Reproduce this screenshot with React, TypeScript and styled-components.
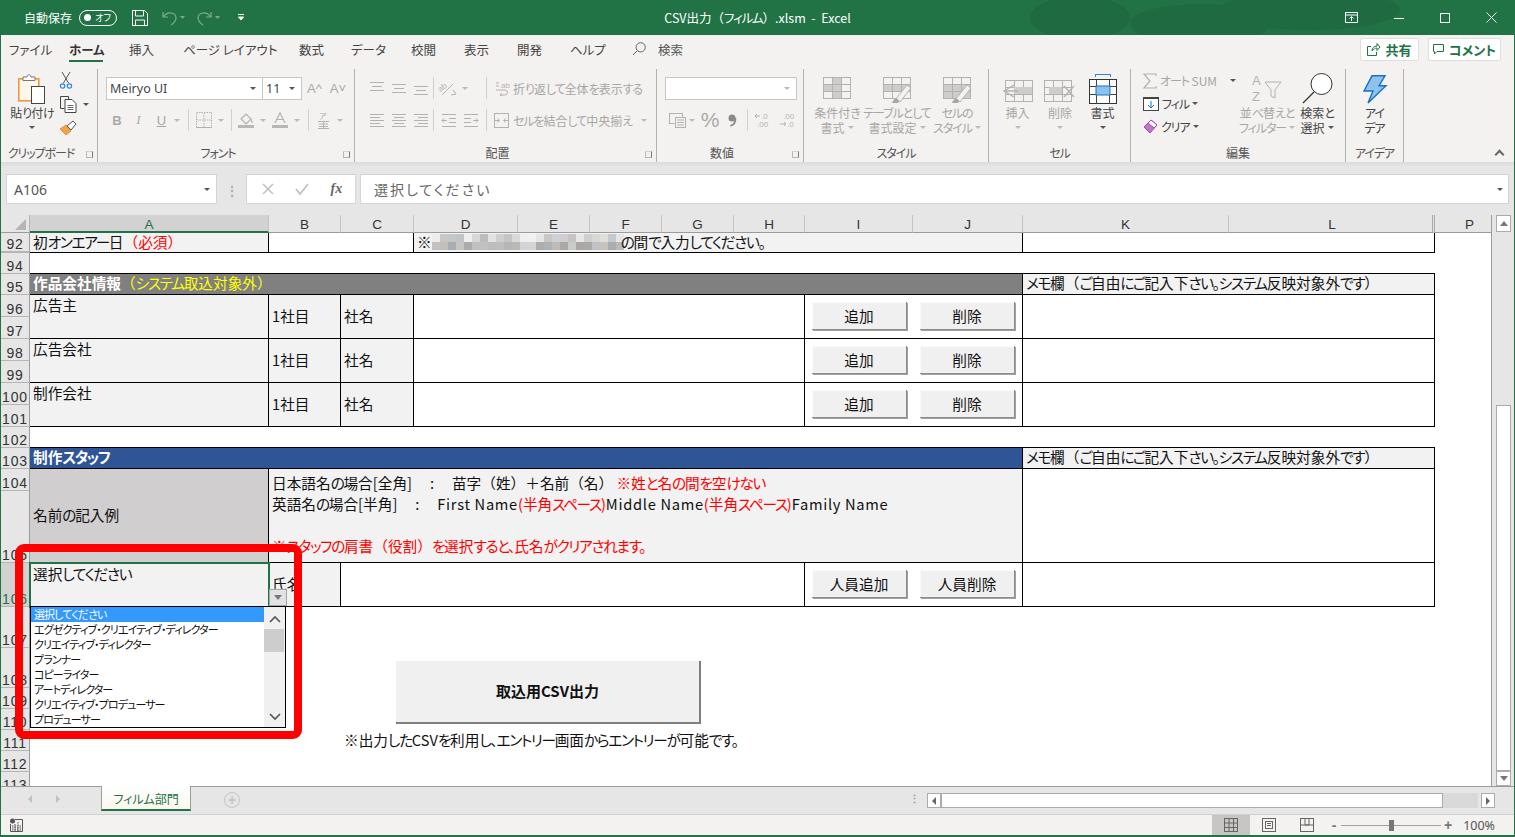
import React from 'react'
import styled, { createGlobalStyle } from 'styled-components'

const UI_FONT = '"Noto Sans CJK JP", "Noto Sans", sans-serif'
const GREEN = '#217346'
const DIS = '#b4b2b0'

const GlobalStyle = createGlobalStyle`
  html, body {
    margin: 0;
    padding: 0;
    width: 1515px;
    height: 837px;
    overflow: hidden;
    background: #f3f2f1;
  }
  * { box-sizing: border-box; }
`

/* Meiryo UI has narrow kana and full width kanji, so kana runs get squeezed */
const Kana = styled.span`
  font-feature-settings: 'palt';
  letter-spacing: -0.09em;
`

const Kan = styled.span`
  font-feature-settings: normal;
`

const jp = (text: string) =>
  text
    .split(/([\u3040-\u30ff、。]+)/)
    .map((s, i) => (i % 2 ? <Kana key={i}>{s}</Kana> : <Kan key={i}>{s}</Kan>))

/* ---------- icons ---------- */

const Svg = styled.svg`
  display: block;
  flex: none;
  overflow: visible;
`

const Icon = ({ w, h, children }: { w: number; h: number; children: React.ReactNode }) => (
  <Svg width={w} height={h} viewBox={`0 0 ${w} ${h}`} fill="none">
    {children}
  </Svg>
)

const Lines = ({ rows }: { rows: [number, number, number][] }) => (
  <>
    {rows.map(([y, a, b]) => (
      <path key={y + '-' + a} d={`M${a} ${y + 0.5}H${b}`} stroke={DIS} />
    ))}
  </>
)

const PasteIcon = () => (
  <Icon w={28} h={30}>
    <rect x="0.8" y="4.8" width="20" height="22" fill="#fdf6ea" stroke="#ed9a3c" strokeWidth="1.6" />
    <path d="M5 5V3h4c0-3 4-3 4 0h4v3.5H5z" fill="#fff" stroke="#777" />
    <rect x="13.5" y="12.5" width="13" height="17" fill="#fff" stroke="#444" />
  </Icon>
)

const ScissorsIcon = () => (
  <Icon w={12} h={17}>
    <path d="M2 0l6.5 11M10 0L3.5 11" stroke="#555" />
    <circle cx="2.6" cy="14" r="2.2" stroke="#2b88d8" strokeWidth="1.2" />
    <circle cx="9.4" cy="14" r="2.2" stroke="#2b88d8" strokeWidth="1.2" />
  </Icon>
)

const CopyIcon = () => (
  <Icon w={17} h={17}>
    <path d="M4.5 12.5H.5V.5h8V3" stroke="#444" />
    <path d="M5 3.5h7l4 4v9H5z" fill="#fff" stroke="#444" />
    <path d="M7.5 9.5h6M7.5 11.5h6M7.5 13.5h6" stroke="#666" />
  </Icon>
)

const BrushIcon = () => (
  <Icon w={16} h={15}>
    <path d="M0 8l6-4 5 6-5 4z" fill="#f2a24a" stroke="#e8913a" />
    <path d="M7 5l6-5 3 3-5 6z" fill="#fff" stroke="#555" />
  </Icon>
)

const FillIcon = () => (
  <Icon w={16} h={16}>
    <path d="M3 7l5-5 5 5-5 5z" stroke={DIS} strokeWidth="1.2" />
    <path d="M13 7c2 2 2 4 1 4s-1-2-1-4z" fill={DIS} />
    <rect y="13" width="16" height="3" fill="#b9b7b5" />
  </Icon>
)

const FontColorIcon = () => (
  <Icon w={16} h={16}>
    <path d="M3 11L8 .8 13 11M5 7.500h6" stroke={DIS} strokeWidth="1.2" />
    <rect y="13" width="16" height="3" fill="#b9b7b5" />
  </Icon>
)

const PhoneticIcon = () => (
  <Icon w={13} h={17}>
    <text x="2" y="7" fontFamily="Noto Sans CJK JP, sans-serif" fontSize="8" fill={DIS}>ア</text>
    <path d="M1 9.500h11M2 12h9M2 14.500h9M1 16.500h11M6.500 9v7" stroke={DIS} />
  </Icon>
)

const BorderIcon = () => (
  <Icon w={16} h={16}>
    <rect x="0.5" y="0.5" width="15" height="15" stroke={DIS} strokeDasharray="1.5 1" />
    <path d="M8 1v14M1 8h14" stroke={DIS} strokeDasharray="1.5 1" />
    <path d="M0 15.5h16" stroke={DIS} />
  </Icon>
)

const OrientIcon = () => (
  <Icon w={18} h={15}>
    <text x="0" y="9" fontFamily="Liberation Sans, sans-serif" fontSize="8" fill={DIS} transform="rotate(-40 4 8)">ab</text>
    <path d="M3 14L14 3" stroke={DIS} />
    <path d="M14 9l3 4-5 1" stroke={DIS} />
  </Icon>
)

const WrapIcon = () => (
  <Icon w={15} h={15}>
    <text x="6" y="7" fontFamily="Liberation Sans, sans-serif" fontSize="8" fill={DIS}>ab</text>
    <path d="M1 2h3M1 5h3M1 9h9a2.500 2.500 0 0 1 0 5H5M7 12l-2 2 2 1" stroke={DIS} />
  </Icon>
)

const CommaIcon = () => (
  <Icon w={8} h={13}>
    <circle cx="4" cy="4" r="3.500" fill="#8c8a88" />
    <path d="M7.400 4c.3 4-2 7-5 8" stroke="#8c8a88" strokeWidth="1.800" />
  </Icon>
)

const TableGrid = ({ shade, brush }: { shade: string; brush?: boolean }) => (
  <Icon w={32} h={28}>
    <rect x="2.5" y="1.5" width="27" height="21" fill="#f3f2f1" stroke={DIS} />
    <path d={shade} fill="#cfcdcb" />
    <path d="M2 8.5h28M2 15.5h28M11.5 2v21M20.5 2v21" stroke={DIS} />
    {brush && (
      <>
        <path d="M14 24l12-15 4 3-11 14z" fill="#f3f2f1" stroke={DIS} />
        <path d="M11 27c2-5 4-5 7-3l-1 3z" fill="#a9a7a5" />
      </>
    )}
  </Icon>
)

const InsertIcon = () => (
  <Icon w={32} h={24}>
    <rect x="3.5" y="0.5" width="27" height="21" stroke={DIS} />
    <path d="M3 7.5h28M3 14.5h28M12.5 1v21M21.5 1v21" stroke={DIS} />
    <rect x="12" y="7" width="18" height="7" fill="#cfcdcb" />
    <path d="M12 5L2 11l10 6M2 11h14" stroke={DIS} strokeWidth="1.4" />
  </Icon>
)

const DeleteIcon = () => (
  <Icon w={32} h={24}>
    <rect x="0.5" y="0.5" width="27" height="21" stroke={DIS} />
    <path d="M0 7.5h28M0 14.5h28M9.5 1v21M18.5 1v21" stroke={DIS} />
    <rect x="5" y="7" width="13" height="7" fill="#cfcdcb" />
    <path d="M20 6l10 11M30 6L20 17" stroke={DIS} strokeWidth="1.4" />
  </Icon>
)

const FormatIcon = () => (
  <Icon w={28} h={30}>
    <path d="M6 .5h16M6.5 0v3M21.5 0v3" stroke="#2b88d8" />
    <rect x="0.5" y="5.5" width="27" height="24" fill="#fff" stroke="#333" strokeWidth="1" />
    <path d="M0 12.5h28M0 20.5h28M7.5 6v24M20.5 6v24" stroke="#444" />
    <rect x="7" y="12" width="14" height="9" fill="#8fc1ee" stroke="#1672c4" />
  </Icon>
)

const SortIcon = () => (
  <Icon w={30} h={30}>
    <text x="0" y="11" fontFamily="Liberation Sans, sans-serif" fontSize="13" fill={DIS}>A</text>
    <text x="0" y="27" fontFamily="Liberation Sans, sans-serif" fontSize="13" fill={DIS}>Z</text>
    <path d="M13 8h16l-6 8v8l-4-2v-6z" stroke={DIS} />
  </Icon>
)

const FindIcon = () => (
  <Icon w={31} h={31}>
    <circle cx="19.5" cy="11" r="10.5" fill="#fff" stroke="#333" />
    <path d="M12 19L1 30" stroke="#333" strokeWidth="1.3" />
  </Icon>
)

const BoltIcon = () => (
  <Icon w={24} h={29}>
    <path d="M9 .8h13l-6 10h7L5 28l5-12H1z" fill="#8fc1ee" stroke="#1672c4" strokeWidth="1.4" />
  </Icon>
)

const SearchGlyph = ({ size, color }: { size: number; color: string }) => (
  <Icon w={size} h={size}>
    <circle cx={size * 0.62} cy={size * 0.38} r={size * 0.33} stroke={color} />
    <path d={`M${size * 0.38} ${size * 0.62}L1 ${size - 1}`} stroke={color} />
  </Icon>
)

/* ---------- shared small bits ---------- */

const Caret = styled.span<{ $dim?: boolean }>`
  display: inline-block;
  flex: none;
  width: 0;
  height: 0;
  border-left: 3px solid transparent;
  border-right: 3px solid transparent;
  border-top: 3px solid ${p => (p.$dim ? '#bcbab8' : '#555')};
`

/* ---------- title bar ---------- */

const Frame = styled.div`
  width: 1515px;
  height: 837px;
  display: flex;
  flex-direction: column;
  border-left: 1px solid ${GREEN};
  border-right: 1px solid ${GREEN};
  border-bottom: 2px solid ${GREEN};
  font-family: ${UI_FONT};
  font-feature-settings: 'palt';
  overflow: hidden;
`

const TitleBar = styled.div`
  position: relative;
  flex: none;
  height: 35px;
  margin: 0 -1px;
  background: ${GREEN};
  color: #fff;
  display: grid;
  grid-template-columns: 1fr auto 1fr;
  align-items: center;
`

const TitleArt = styled.svg`
  position: absolute;
  top: 0;
  left: 1010px;
  width: 400px;
  height: 35px;
`

const QuickBar = styled.div`
  display: flex;
  align-items: center;
  padding-left: 24px;
  font-size: 12px;
`

const Toggle = styled.span`
  display: flex;
  align-items: center;
  justify-content: space-between;
  width: 38px;
  height: 16px;
  margin: 0 15px 0 7px;
  padding: 0 5px 0 4px;
  border: 1px solid #fff;
  border-radius: 8px;
  font-size: 9px;
  &::before {
    content: '';
    width: 7px;
    height: 7px;
    border-radius: 50%;
    background: #fff;
  }
`

const QuickSlot = styled.span<{ $w: number; $dim?: boolean }>`
  display: flex;
  align-items: center;
  width: ${p => p.$w}px;
  opacity: ${p => (p.$dim ? 0.4 : 1)};
`

const TitleText = styled.div`
  font-size: 12.5px;
  position: relative;
  white-space: pre;
`

const WindowButtons = styled.div`
  position: relative;
  display: flex;
  justify-content: flex-end;
  align-items: center;
  padding-right: 18px;
  gap: 36px;
`

/* ---------- tabs ---------- */

const TabRow = styled.div`
  flex: none;
  height: 30px;
  background: #f3f2f1;
  display: flex;
  align-items: center;
  padding: 0 13px 2px 8px;
`

const Tab = styled.div<{ $w: number; $on?: boolean }>`
  position: relative;
  width: ${p => p.$w}px;
  font-size: 12.5px;
  color: ${p => (p.$on ? '#333' : '#444')};
  font-weight: ${p => (p.$on ? 700 : 400)};
  white-space: pre;
  ${p =>
    p.$on &&
    `&::after {
      content: '';
      position: absolute;
      left: 0;
      top: 20px;
      width: 34px;
      height: 2px;
      background: ${GREEN};
    }`}
`

const SearchTab = styled.div`
  display: flex;
  align-items: center;
  gap: 12px;
  font-size: 12.5px;
  color: #555;
`

const TabRight = styled.div`
  margin-left: auto;
  display: flex;
  gap: 9px;
`

const ShareButton = styled.div<{ $w: number }>`
  width: ${p => p.$w}px;
  height: 23px;
  display: flex;
  align-items: center;
  justify-content: center;
  gap: 5px;
  background: #fff;
  border: 1px solid #e1dfdd;
  border-radius: 2px;
  color: ${GREEN};
  font-size: 13px;
  font-weight: 700;
`

/* ---------- ribbon ---------- */

const Ribbon = styled.div`
  flex: none;
  height: 97px;
  background: #f3f2f1;
  display: flex;
  position: relative;
`

const Group = styled.div<{ $w: number }>`
  position: relative;
  width: ${p => p.$w}px;
  flex: none;
  height: 93px;
  margin-top: 4px;
  display: flex;
  flex-direction: column;
  border-right: 1px solid #b3b0ad;
`

const GroupBody = styled.div<{ $pad?: number; $col?: boolean }>`
  flex: 1;
  display: flex;
  flex-direction: ${p => (p.$col ? 'column' : 'row')};
  padding-left: ${p => p.$pad ?? 0}px;
`

const GroupLabel = styled.div<{ $launch?: boolean }>`
  height: 20px;
  padding-top: 2px;
  padding-right: ${p => (p.$launch ? 16 : 0)}px;
  font-size: 12px;
  line-height: 17px;
  text-align: center;
  color: #555;
  white-space: nowrap;
`

const Launcher = styled.span`
  position: absolute;
  right: 4px;
  bottom: 4px;
  width: 7px;
  height: 7px;
  border-left: 1px solid #b9b7b5;
  border-bottom: 1px solid #b9b7b5;
  border-top: 1px solid #d6d4d2;
  border-right: 1px solid #777;
`

const BigTool = styled.div<{ $w: number; $dim?: boolean }>`
  width: ${p => p.$w}px;
  flex: none;
  display: flex;
  flex-direction: column;
  align-items: center;
  color: ${p => (p.$dim ? '#a8a6a4' : '#444')};
  font-size: 12px;
  line-height: 15px;
  white-space: nowrap;
`

const BigIconBox = styled.div`
  height: 36px;
  display: flex;
  align-items: flex-end;
  justify-content: center;
  padding-bottom: 1px;
`

const CaretLine = styled.div`
  height: 15px;
  display: flex;
  align-items: center;
  justify-content: center;
  gap: 3px;
`

const ToolRow = styled.div<{ $h: number; $pad?: number }>`
  height: ${p => p.$h}px;
  flex: none;
  display: flex;
  align-items: center;
  padding-left: ${p => p.$pad ?? 0}px;
`

const Slot = styled.span<{ $w: number; $bold?: boolean; $serif?: boolean; $italic?: boolean; $under?: boolean; $size?: number }>`
  width: ${p => p.$w}px;
  flex: none;
  display: flex;
  align-items: center;
  justify-content: center;
  color: #aaa8a6;
  font-family: ${p => (p.$serif ? '"Liberation Serif", serif' : '"Liberation Sans", sans-serif')};
  font-size: ${p => p.$size ?? 13}px;
  font-weight: ${p => (p.$bold ? 700 : 400)};
  font-style: ${p => (p.$italic ? 'italic' : 'normal')};
  text-decoration: ${p => (p.$under ? 'underline' : 'none')};
`

const VSep = styled.span`
  width: 1px;
  height: 22px;
  flex: none;
  background: #d2d0ce;
`

const DimText = styled.span<{ $dark?: boolean }>`
  font-size: 12px;
  color: ${p => (p.$dark ? '#444' : '#a8a6a4')};
  white-space: nowrap;
`

const ComboBox = styled.div<{ $w: number; $dim?: boolean }>`
  width: ${p => p.$w}px;
  height: 23px;
  flex: none;
  display: flex;
  align-items: center;
  justify-content: space-between;
  padding: 0 6px 0 3px;
  background: #fff;
  border: 1px solid #c8c6c4;
  margin-right: -1px;
  font-family: 'Noto Sans', sans-serif;
  font-size: 12.5px;
  color: #444;
`

const SmallTool = styled.div`
  height: 23px;
  display: flex;
  align-items: center;
  gap: 3px;
`

const SmallStack = styled.div`
  width: 108px;
  flex: none;
  padding-left: 12px;
`

const ClipColumn = styled.div`
  display: flex;
  flex-direction: column;
  padding: 3px 0 0 7px;
  gap: 7px;
`

const ClipItem = styled.div`
  height: 17px;
  display: flex;
  align-items: center;
  gap: 6px;
`

const Collapse = styled.div`
  position: absolute;
  right: 11px;
  bottom: 4px;
  width: 7px;
  height: 7px;
  border-left: 2px solid #666;
  border-top: 2px solid #666;
  transform: rotate(45deg);
`

/* ---------- formula bar ---------- */

const FormulaBar = styled.div`
  flex: none;
  height: 53px;
  background: linear-gradient(#dcdbda 0, #e6e6e6 5px);
  display: flex;
  align-items: flex-start;
  padding: 12px 5px 0 5px;
`

const NameBox = styled.div`
  width: 211px;
  height: 30px;
  flex: none;
  background: #fff;
  border: 1px solid #d4d4d4;
  display: flex;
  align-items: center;
  justify-content: space-between;
  padding: 0 6px 0 7px;
  font-family: 'Noto Sans', sans-serif;
  font-size: 14px;
  color: #555;
`

const BarDots = styled.div`
  width: 29px;
  height: 30px;
  flex: none;
  display: flex;
  justify-content: center;
  align-items: center;
  color: #aaa;
  font-size: 12px;
  font-weight: 700;
`

const BarButtons = styled.div`
  width: 110px;
  height: 30px;
  flex: none;
  background: #fff;
  border: 1px solid #d4d4d4;
  display: flex;
  align-items: center;
  justify-content: space-around;
  padding: 0 2px 0 4px;
`

const FxMark = styled.span`
  font-family: 'Liberation Serif', serif;
  font-style: italic;
  font-weight: 700;
  font-size: 14px;
  color: #666;
`

const FormulaInput = styled.div`
  margin-left: 4px;
  flex: 1;
  height: 30px;
  background: #fff;
  border: 1px solid #d4d4d4;
  display: flex;
  align-items: center;
  justify-content: space-between;
  padding: 0 5px 0 13px;
  font-size: 14px;
  letter-spacing: 2px;
  color: #666;
`

/* ---------- sheet ---------- */

const SheetRow = styled.div`
  flex: none;
  height: 571px;
  display: flex;
  background: #e6e6e6;
`

const Sheet = styled.div`
  position: relative;
  width: 1491px;
  flex: none;
  height: 571px;
  overflow: hidden;
  background: #fff;
  display: grid;
  grid-template-columns: 29px 239px 72px 73px 104px 72px 72px 72px 71px 108px 110px 206px 206px 70px;
  grid-template-rows: 18px 20px 21px 21px 22px 22px 22px 22px 22px 22px 21px 21px 22px 72px 44px 41px 40px 21px 21px 21px 21px 21px;
  border-right: 1px solid #9b9b9b;
  font-family: ${UI_FONT};
`

const Corner = styled.div`
  grid-column: 1;
  grid-row: 1;
  background: #e6e6e6;
  border-right: 1px solid #b5b5b5;
  border-bottom: 1px solid #9b9b9b;
  position: relative;
  &::after {
    content: '';
    position: absolute;
    right: 3px;
    bottom: 2px;
    border-left: 11px solid transparent;
    border-bottom: 11px solid #b5b5b5;
  }
`

const ColHead = styled.div<{ $c: number; $on?: boolean; $double?: boolean }>`
  grid-column: ${p => p.$c};
  grid-row: 1;
  background: ${p => (p.$on ? '#d2d2d2' : '#e6e6e6')};
  border-right: ${p => (p.$double ? '3px double #a8a8a8' : '1px solid #c4c4c4')};
  border-bottom: ${p => (p.$on ? `2px solid ${GREEN}` : '1px solid #9b9b9b')};
  padding-left: ${p => (p.$double ? 3 : 0)}px;
  color: ${p => (p.$on ? GREEN : '#333')};
  font-family: 'Liberation Sans', sans-serif;
  font-size: 13.5px;
  line-height: 19px;
  text-align: center;
`

const RowHead = styled.div<{ $r: number; $on?: boolean; $thick?: boolean }>`
  grid-column: 1;
  grid-row: ${p => p.$r};
  background: ${p => (p.$on ? '#d2d2d2' : '#e6e6e6')};
  border-right: 1px solid ${p => (p.$on ? GREEN : '#9b9b9b')};
  border-bottom: ${p => (p.$thick ? 2 : 1)}px solid #b5b5b5;
  color: ${p => (p.$on ? GREEN : '#333')};
  font-family: 'Liberation Sans', sans-serif;
  font-size: 14px;
  letter-spacing: 0.8px;
  display: flex;
  align-items: flex-end;
  justify-content: center;
  line-height: 14px;
  overflow: hidden;
  white-space: nowrap;
`

const Cell = styled.div<{
  $c: string
  $r: string
  $bg?: string
  $color?: string
  $bold?: boolean
  $align?: 'start' | 'center' | 'end'
  $top?: boolean
  $bare?: boolean
}>`
  grid-column: ${p => p.$c};
  grid-row: ${p => p.$r};
  background: ${p => p.$bg ?? 'transparent'};
  color: ${p => p.$color ?? '#111'};
  font-size: 14.67px;
  font-weight: ${p => (p.$bold ? 700 : 400)};
  line-height: 19px;
  display: flex;
  align-items: ${p => p.$align ?? 'center'};
  padding: 0 0 ${p => (p.$top ? 3 : 2)}px 3px;
  white-space: nowrap;
  border-right: ${p => (p.$bare ? 'none' : '1px solid #000')};
  border-bottom: ${p => (p.$bare ? 'none' : '1px solid #000')};
  border-top: ${p => (p.$top ? '1px solid #000' : 'none')};
  margin-top: ${p => (p.$top ? -1 : 0)}px;
`

const ActiveCell = styled(Cell)`
  position: relative;
  z-index: 2;
  outline: 2px solid ${GREEN};
  outline-offset: -1px;
  padding-top: 1px;
`

const NoteCell = styled(Cell)`
  display: block;
  padding-top: 3px;
  line-height: 21px;
  white-space: pre;
`

const Red = styled.span`
  color: #ff0000;
`

const Yellow = styled.span`
  color: #ffff00;
  font-weight: 400;
`

const Latin = styled.span`
  letter-spacing: 0.7px;
`

const Mosaic = styled.span`
  display: inline-grid;
  grid-template-columns: repeat(24, 8px);
  grid-auto-rows: 8px;
  margin-right: -3px;
`

const Tile = styled.i<{ $bg: string }>`
  background: ${p => p.$bg};
`

const ButtonCell = styled(Cell)`
  gap: 13px;
  padding-left: 7px;
  padding-bottom: 1px;
`

const SheetButton = styled.div`
  width: 95px;
  height: 28px;
  display: flex;
  align-items: center;
  justify-content: center;
  background: #f0f0f0;
  border-right: 1px solid #8c8c8c;
  border-bottom: 1px solid #8c8c8c;
  box-shadow: 1px 1px 0 #a0a0a0, inset 1px 1px 0 #fafafa;
  font-size: 14.67px;
  color: #111;
`

const CsvButton = styled.div`
  position: absolute;
  left: 395px;
  top: 446px;
  width: 305px;
  height: 63px;
  padding-bottom: 2px;
  display: flex;
  align-items: center;
  justify-content: center;
  background: #f0f0f0;
  border-right: 2px solid #7f7f7f;
  border-bottom: 2px solid #7f7f7f;
  font-size: 15px;
  font-weight: 700;
  color: #111;
`

const DropButton = styled.div`
  position: absolute;
  left: 268px;
  top: 374px;
  z-index: 3;
  width: 18px;
  height: 17px;
  background: #e2e2e6;
  border: 1px solid #a6a6a6;
  display: flex;
  align-items: center;
  justify-content: center;
`

const DropList = styled.div`
  position: absolute;
  left: 29px;
  top: 391px;
  z-index: 3;
  width: 256px;
  height: 122px;
  background: #fff;
  border: 1px solid #000;
  display: flex;
`

const DropItems = styled.div`
  flex: 1;
`

const DropItem = styled.div<{ $on?: boolean }>`
  height: 15px;
  line-height: 15px;
  padding-left: 3px;
  font-size: 11px;
  font-feature-settings: 'palt';
  letter-spacing: -0.9px;
  white-space: nowrap;
  color: ${p => (p.$on ? '#fff' : '#111')};
  background: ${p => (p.$on ? '#3399ff' : 'transparent')};
`

const DropScroll = styled.div`
  position: relative;
  width: 21px;
  flex: none;
  background: #f0f0f0;
  display: flex;
  flex-direction: column;
  justify-content: space-between;
  align-items: center;
  padding: 9px 0 7px;
  &::before {
    content: '';
    position: absolute;
    left: 0;
    top: 22px;
    width: 20px;
    height: 23px;
    background: #cdcdcd;
  }
`

const RedFrame = styled.div`
  position: absolute;
  left: 14px;
  top: 329px;
  z-index: 4;
  width: 287px;
  height: 195px;
  border: 8px solid #ff0000;
  border-radius: 9px;
  pointer-events: none;
`

const VScroll = styled.div`
  flex: 1;
  display: flex;
  flex-direction: column;
  padding: 0 3px 0 4px;
`

const ScrollButton = styled.div<{ $h: number }>`
  height: ${p => p.$h}px;
  flex: none;
  display: flex;
  align-items: center;
  justify-content: center;
  background: #fff;
  border: 1px solid #ababab;
`

const ScrollTrack = styled.div`
  flex: 1;
  padding-top: 173px;
  background: #e6e6e6;
  display: flex;
`

const ScrollThumb = styled.div`
  flex: 1;
  background: #fff;
  border: 1px solid #ababab;
`

const UpArrow = styled.span`
  width: 0;
  height: 0;
  border-left: 4px solid transparent;
  border-right: 4px solid transparent;
  border-bottom: 5px solid #777;
`

const DownArrow = styled.span`
  width: 0;
  height: 0;
  border-left: 4px solid transparent;
  border-right: 4px solid transparent;
  border-top: 5px solid #777;
`

/* ---------- bottom ---------- */

const TabBar = styled.div`
  flex: none;
  height: 28px;
  background: #e6e6e6;
  border-top: 1px solid #9b9b9b;
  display: flex;
  align-items: flex-start;
`

const TabNav = styled.div`
  width: 100px;
  height: 24px;
  flex: none;
  display: flex;
  align-items: center;
  justify-content: flex-start;
  gap: 24px;
  padding-left: 27px;
`

const SideArrow = styled.span<{ $dir: 'l' | 'r'; $dark?: boolean }>`
  width: 0;
  height: 0;
  border-top: 4px solid transparent;
  border-bottom: 4px solid transparent;
  ${p => (p.$dir === 'l' ? 'border-right' : 'border-left')}: 4px solid ${p => (p.$dark ? '#666' : '#c0c0c0')};
`

const SheetTab = styled.div`
  width: 90px;
  height: 25px;
  flex: none;
  margin-top: -1px;
  background: linear-gradient(#fff, #fbf7ee);
  border-left: 1px solid #9b9b9b;
  border-right: 1px solid #9b9b9b;
  border-bottom: 2px solid ${GREEN};
  color: ${GREEN};
  font-size: 12px;
  line-height: 25px;
  text-align: center;
`

const AddSheet = styled.div`
  margin: 5px 0 0 33px;
  width: 16px;
  height: 16px;
  flex: none;
  border: 1px solid #c4c4c4;
  border-radius: 50%;
  color: #c4c4c4;
  display: flex;
  align-items: center;
  justify-content: center;
  font-family: 'Liberation Sans', sans-serif;
  font-size: 14px;
  font-weight: 700;
  line-height: 1;
`

const TabDots = styled.div`
  margin: 3px 0 0 669px;
  width: 18px;
  flex: none;
  color: #a0a0a0;
  font-size: 11px;
  font-weight: 700;
`

const HScroll = styled.div`
  margin-top: 6px;
  width: 568px;
  height: 15px;
  flex: none;
  display: flex;
`

const HButton = styled.div`
  width: 14px;
  flex: none;
  background: #fff;
  border: 1px solid #ababab;
  display: flex;
  align-items: center;
  justify-content: center;
`

const HThumb = styled.div`
  width: 502px;
  flex: none;
  background: #fff;
  border: 1px solid #ababab;
`

const HRest = styled.div`
  flex: 1;
  margin-right: 3px;
  background: #d9d9d9;
`

const StatusBar = styled.div`
  flex: none;
  height: 21px;
  background: #f3f2f1;
  border-top: 1px solid #d0d0d0;
  display: flex;
  align-items: center;
  padding-left: 8px;
`

const StatusRight = styled.div`
  margin-left: auto;
  height: 100%;
  display: flex;
  align-items: center;
  padding-right: 19px;
`

const ViewButton = styled.div<{ $on?: boolean }>`
  width: 38px;
  height: 100%;
  display: flex;
  align-items: center;
  justify-content: center;
  background: ${p => (p.$on ? '#c8c6c4' : 'transparent')};
`

const ZoomTrack = styled.div`
  position: relative;
  width: 100px;
  height: 1px;
  margin: 0 2px;
  background: #a0a0a0;
  &::after {
    content: '';
    position: absolute;
    left: 48px;
    top: -5px;
    width: 5px;
    height: 11px;
    background: #777;
  }
`

const ZoomSign = styled.span`
  font-family: 'Liberation Sans', sans-serif;
  font-size: 14px;
  font-weight: 700;
  color: #777;
  width: 10px;
  text-align: center;
  line-height: 14px;
`

const ZoomValue = styled.span`
  margin-left: 10px;
  font-family: 'Noto Sans', sans-serif;
  font-size: 12.5px;
  color: #555;
`

/* ---------- data ---------- */

const tabs: [string, number, boolean?][] = [
  ['ファイル', 60],
  ['ホーム', 60, true],
  ['挿入', 54],
  ['ページ レイアウト', 116],
  ['数式', 52],
  ['データ', 60],
  ['校閲', 53],
  ['表示', 53],
  ['開発', 53],
  ['ヘルプ', 62],
]

const columns: [string, number, boolean?, boolean?][] = [
  ['A', 2, true],
  ['B', 3],
  ['C', 4],
  ['D', 5],
  ['E', 6],
  ['F', 7],
  ['G', 8],
  ['H', 9],
  ['I', 10],
  ['J', 11],
  ['K', 12],
  ['L', 13, false, true],
  ['P', 14],
]

const rowLabels = ['92', '94', '95', '96', '97', '98', '99', '100', '101', '102', '103', '104', '105', '106', '107', '108', '109', '110', '111', '112', '113']

const tiles = [
  '#ececec', '#c9c6c4', '#c5c6c8', '#c1c3c6', '#eeeeee', '#d7d7d5', '#bebdbc', '#e2e2e0', '#cfcfcd', '#c5c5c9', '#dadad8', '#efefef',
  '#f0f0f0', '#e6e6e6', '#c9c7c5', '#ced0d2', '#d0cecc', '#c6c3c2', '#e6e8e8', '#d0cfcd', '#d7d7d5', '#e0dedb', '#c7cacc', '#e6e6e6',
  '#c4c0bf', '#c4bebb', '#a9aeb5', '#c6c5c1', '#aeaaaa', '#bfc0bf', '#c2c1bf', '#bcbcbc', '#c0bfbd', '#b8b6b4', '#bbb9b6', '#d2d3d5',
  '#d4d4d4', '#b0acab', '#adb2b8', '#bfbbb9', '#aca8a6', '#c7cccb', '#aba6a5', '#aaaba6', '#c0c1c4', '#c9c1bb', '#a9adb2', '#bcbab8',
]

const staff = [
  '選択してください',
  'エグゼクティブ・クリエイティブ・ディレクター',
  'クリエイティブ・ディレクター',
  'プランナー',
  'コピーライター',
  'アートディレクター',
  'クリエイティブ・プロデューサー',
  'プロデューサー',
]

const companies: [string, string][] = [
  ['広告主', '5 / 7'],
  ['広告会社', '7 / 9'],
  ['制作会社', '9 / 11'],
]

const MEMO = 'メモ欄（ご自由にご記入下さい。システム反映対象外です）'

export default function App() {
  return (
    <>
      <GlobalStyle />
      <Frame>
        <TitleBar>
          <TitleArt viewBox="0 0 400 35" fill="#1f6a40">
            <ellipse cx="70" cy="18" rx="50" ry="22" />
            <ellipse cx="190" cy="24" rx="70" ry="20" />
            <ellipse cx="300" cy="10" rx="90" ry="20" />
          </TitleArt>
          <QuickBar>
            自動保存
            <Toggle>オフ</Toggle>
            <QuickSlot $w={30}>
              <Icon w={16} h={16}>
                <path d="M.5.5h12l3 3v12H.5zM3.5 1v5h8V1M3.5 15.5V10h9v5.5" stroke="#fff" />
              </Icon>
            </QuickSlot>
            <QuickSlot $w={35} $dim>
              <Icon w={22} h={16}>
                <path d="M1 2v5h5M1.5 7C5 1 14 2 14 8c0 3-2 5-5 7" stroke="#fff" strokeWidth="1.2" />
                <path d="M18 6h5l-2.500 3z" fill="#fff" />
              </Icon>
            </QuickSlot>
            <QuickSlot $w={41} $dim>
              <Icon w={22} h={16}>
                <path d="M14 2v5H9M13.500 7C10 1 1 2 1 8c0 3 2 5 5 7" stroke="#fff" strokeWidth="1.2" />
                <path d="M18 6h5l-2.500 3z" fill="#fff" />
              </Icon>
            </QuickSlot>
            <QuickSlot $w={10}>
              <Icon w={6} h={7}>
                <path d="M0 .5h6M.5 3h5L3 6z" stroke="#fff" fill="#fff" />
              </Icon>
            </QuickSlot>
          </QuickBar>
          <TitleText>{jp('CSV出力（フィルム）.xlsm  -  Excel')}</TitleText>
          <WindowButtons>
            <Icon w={13} h={11}>
              <path d="M.5.5h12v10H.5zM1 3h11M6.500 9V5M4.500 6.500l2-2 2 2" stroke="#fff" />
            </Icon>
            <Icon w={10} h={10}>
              <path d="M0 5.500h10" stroke="#fff" />
            </Icon>
            <Icon w={10} h={10}>
              <rect x=".5" y=".5" width="9" height="9" stroke="#fff" />
            </Icon>
            <Icon w={11} h={11}>
              <path d="M.5.5l10 10M10.500.5l-10 10" stroke="#fff" />
            </Icon>
          </WindowButtons>
        </TitleBar>

        <TabRow>
          {tabs.map(([label, w, on]) => (
            <Tab key={label} $w={w} $on={on}>
              {label}
            </Tab>
          ))}
          <SearchTab>
            <SearchGlyph size={14} color="#666" />
            検索
          </SearchTab>
          <TabRight>
            <ShareButton $w={59}>
              <Icon w={13} h={13}>
                <path d="M4 3.500H.5v9h9V9M5 8c0-3 2-5 5-5V.5l3 3.500-3 3.500V5c-2 0-3 1-5 3z" stroke={GREEN} />
              </Icon>
              共有
            </ShareButton>
            <ShareButton $w={73}>
              <Icon w={11} h={11}>
                <path d="M.5.5h10v7H4L1.500 10V7.500h-1z" stroke={GREEN} />
              </Icon>
              コメント
            </ShareButton>
          </TabRight>
        </TabRow>

        <Ribbon>
          <Group $w={97}>
            <GroupBody $pad={10}>
              <BigTool $w={42}>
                <BigIconBox>
                  <PasteIcon />
                </BigIconBox>
                <span>{jp('貼り付け')}</span>
                <CaretLine>
                  <Caret />
                </CaretLine>
              </BigTool>
              <ClipColumn>
                <ClipItem>
                  <ScissorsIcon />
                </ClipItem>
                <ClipItem>
                  <CopyIcon />
                  <Caret />
                </ClipItem>
                <ClipItem>
                  <BrushIcon />
                </ClipItem>
              </ClipColumn>
            </GroupBody>
            <GroupLabel $launch>{jp('クリップボード')}</GroupLabel>
            <Launcher />
          </Group>

          <Group $w={257}>
            <GroupBody $col>
              <ToolRow $h={38} $pad={8}>
                <ComboBox $w={157}>
                  Meiryo UI
                  <Caret />
                </ComboBox>
                <ComboBox $w={40}>
                  11
                  <Caret />
                </ComboBox>
                <Slot $w={27}>A^</Slot>
                <Slot $w={20}>A˅</Slot>
              </ToolRow>
              <ToolRow $h={26} $pad={8}>
                <Slot $w={22} $bold>B</Slot>
                <Slot $w={21} $serif $italic>I</Slot>
                <Slot $w={25} $under>U</Slot>
                <Caret $dim />
                <Slot $w={8} />
                <VSep />
                <Slot $w={29}>
                  <BorderIcon />
                </Slot>
                <Caret $dim />
                <Slot $w={7} />
                <VSep />
                <Slot $w={28}>
                  <FillIcon />
                </Slot>
                <Caret $dim />
                <Slot $w={28}>
                  <FontColorIcon />
                </Slot>
                <Caret $dim />
                <Slot $w={8} />
                <VSep />
                <Slot $w={28}>
                  <PhoneticIcon />
                </Slot>
                <Caret $dim />
              </ToolRow>
            </GroupBody>
            <GroupLabel $launch>{jp('フォント')}</GroupLabel>
            <Launcher />
          </Group>

          <Group $w={302}>
            <GroupBody $col>
              <ToolRow $h={38} $pad={11}>
                <Slot $w={22}>
                  <Icon w={14} h={14}>
                    <Lines rows={[[1, 0, 14], [5, 2, 12], [9, 0, 14]]} />
                  </Icon>
                </Slot>
                <Slot $w={22}>
                  <Icon w={14} h={14}>
                    <Lines rows={[[3, 0, 14], [7, 2, 12], [11, 0, 14]]} />
                  </Icon>
                </Slot>
                <Slot $w={22}>
                  <Icon w={14} h={14}>
                    <Lines rows={[[5, 0, 14], [9, 2, 12], [13, 0, 14]]} />
                  </Icon>
                </Slot>
                <Slot $w={1} />
                <VSep />
                <Slot $w={28}>
                  <OrientIcon />
                </Slot>
                <Caret $dim />
                <Slot $w={18} />
                <VSep />
                <Slot $w={8} />
                <WrapIcon />
                <Slot $w={3} />
                <DimText>{jp('折り返して全体を表示する')}</DimText>
              </ToolRow>
              <ToolRow $h={26} $pad={11}>
                <Slot $w={22}>
                  <Icon w={14} h={14}>
                    <Lines rows={[[1, 0, 14], [4, 0, 10], [7, 0, 14], [10, 0, 10], [13, 0, 14]]} />
                  </Icon>
                </Slot>
                <Slot $w={22}>
                  <Icon w={14} h={14}>
                    <Lines rows={[[1, 0, 14], [4, 2, 12], [7, 0, 14], [10, 2, 12], [13, 0, 14]]} />
                  </Icon>
                </Slot>
                <Slot $w={22}>
                  <Icon w={14} h={14}>
                    <Lines rows={[[1, 0, 14], [4, 4, 14], [7, 0, 14], [10, 4, 14], [13, 0, 14]]} />
                  </Icon>
                </Slot>
                <Slot $w={1} />
                <VSep />
                <Slot $w={8} />
                <Icon w={14} h={14}>
                  <path d="M0 1.500h14M7 5.500h7M7 9.500h7M0 13.500h14M5 7.500H0M2 5.500L0 7.500l2 2" stroke={DIS} />
                </Icon>
                <Slot $w={8} />
                <Icon w={14} h={14}>
                  <path d="M0 1.500h14M0 5.500h7M0 9.500h7M0 13.500h14M9 7.500h5M12 5.500l2 2-2 2" stroke={DIS} />
                </Icon>
                <Slot $w={8} />
                <VSep />
                <Slot $w={7} />
                <Icon w={15} h={15}>
                  <rect x=".5" y=".5" width="14" height="14" stroke={DIS} />
                  <path d="M1 7.500h4M14 7.500h-4M3.500 5.500l2 2-2 2M11.500 5.500l-2 2 2 2" stroke={DIS} />
                </Icon>
                <Slot $w={4} />
                <DimText>{jp('セルを結合して中央揃え')}</DimText>
                <Slot $w={9} />
                <Caret $dim />
              </ToolRow>
            </GroupBody>
            <GroupLabel $launch>{jp('配置')}</GroupLabel>
            <Launcher />
          </Group>

          <Group $w={147}>
            <GroupBody $col>
              <ToolRow $h={38} $pad={8}>
                <ComboBox $w={132}>
                  <span />
                  <Caret $dim />
                </ComboBox>
              </ToolRow>
              <ToolRow $h={26} $pad={8}>
                <Slot $w={24}>
                  <Icon w={17} h={15}>
                    <rect x=".5" y=".5" width="13" height="10" stroke={DIS} />
                    <rect x="6.500" y="4.500" width="10" height="10" fill="#f3f2f1" stroke={DIS} />
                    <path d="M8 7h7M8 9.500h7M8 12h7" stroke={DIS} />
                  </Icon>
                </Slot>
                <Caret $dim />
                <Slot $w={30} $size={21}>%</Slot>
                <Slot $w={14}>
                  <CommaIcon />
                </Slot>
                <Slot $w={8} />
                <VSep />
                <Slot $w={30}>
                  <Icon w={16} h={16}>
                    <text x="6" y="7" fontFamily="Liberation Sans, sans-serif" fontSize="8" fill={DIS}>.0</text>
                    <text x="2" y="15" fontFamily="Liberation Sans, sans-serif" fontSize="8" fill={DIS}>.00</text>
                    <path d="M5 4H0M2 2L0 4l2 2" stroke={DIS} />
                  </Icon>
                </Slot>
                <Slot $w={18}>
                  <Icon w={16} h={16}>
                    <text x="4" y="7" fontFamily="Liberation Sans, sans-serif" fontSize="8" fill={DIS}>.00</text>
                    <text x="8" y="15" fontFamily="Liberation Sans, sans-serif" fontSize="8" fill={DIS}>.0</text>
                    <path d="M1 12h6M5 10l2 2-2 2" stroke={DIS} />
                  </Icon>
                </Slot>
              </ToolRow>
            </GroupBody>
            <GroupLabel $launch>{jp('数値')}</GroupLabel>
            <Launcher />
          </Group>

          <Group $w={185}>
            <GroupBody $pad={3}>
              <BigTool $w={60} $dim>
                <BigIconBox>
                  <TableGrid shade="M3 9h17v6H3zM12 2h9v7h-9zM12 15h9v7h-9z" />
                </BigIconBox>
                <span>{jp('条件付き')}</span>
                <CaretLine>
                  <span>{jp('書式')}</span> <Caret $dim />
                </CaretLine>
              </BigTool>
              <BigTool $w={60} $dim>
                <BigIconBox>
                  <TableGrid shade="M3 9h26v6H3z" brush />
                </BigIconBox>
                <span>{jp('テーブルとして')}</span>
                <CaretLine>
                  <span>{jp('書式設定')}</span> <Caret $dim />
                </CaretLine>
              </BigTool>
              <BigTool $w={60} $dim>
                <BigIconBox>
                  <TableGrid shade="M3 9h26v13H3z" brush />
                </BigIconBox>
                <span>{jp('セルの')}</span>
                <CaretLine>
                  <span>{jp('スタイル')}</span> <Caret $dim />
                </CaretLine>
              </BigTool>
            </GroupBody>
            <GroupLabel>{jp('スタイル')}</GroupLabel>
          </Group>

          <Group $w={142}>
            <GroupBody $pad={7}>
              <BigTool $w={43} $dim>
                <BigIconBox>
                  <InsertIcon />
                </BigIconBox>
                挿入
                <CaretLine>
                  <Caret $dim />
                </CaretLine>
              </BigTool>
              <BigTool $w={42} $dim>
                <BigIconBox>
                  <DeleteIcon />
                </BigIconBox>
                削除
                <CaretLine>
                  <Caret $dim />
                </CaretLine>
              </BigTool>
              <BigTool $w={43}>
                <BigIconBox>
                  <FormatIcon />
                </BigIconBox>
                書式
                <CaretLine>
                  <Caret />
                </CaretLine>
              </BigTool>
            </GroupBody>
            <GroupLabel>{jp('セル')}</GroupLabel>
          </Group>

          <Group $w={215}>
            <GroupBody>
              <SmallStack>
                <SmallTool>
                  <Icon w={14} h={16}>
                    <path d="M13 3V1H1l6 7-6 7h12v-2" stroke={DIS} strokeWidth="1.2" />
                  </Icon>
                  <DimText>{jp('オート SUM')}</DimText>
                  <Slot $w={7} />
                  <Caret />
                </SmallTool>
                <SmallTool>
                  <Icon w={16} h={14}>
                    <rect x=".5" y="1.500" width="15" height="12" fill="#fff" stroke="#444" />
                    <path d="M0 .5h16" stroke="#444" />
                    <path d="M8 4v7M5 8l3 3 3-3" stroke="#1672c4" />
                  </Icon>
                  <DimText $dark>{jp('フィル')}</DimText>
                  <Caret />
                </SmallTool>
                <SmallTool>
                  <Icon w={15} h={15}>
                    <path d="M1 8l7-7 6 5-7 8z" fill="#c177c9" stroke="#a24bab" />
                    <path d="M5 4l6 5 3-3-6-5z" fill="#fff" stroke="#a24bab" />
                  </Icon>
                  <DimText $dark>{jp('クリア')}</DimText>
                  <Caret />
                </SmallTool>
              </SmallStack>
              <BigTool $w={56} $dim>
                <BigIconBox>
                  <SortIcon />
                </BigIconBox>
                <span>{jp('並べ替えと')}</span>
                <CaretLine>
                  <span>{jp('フィルター')}</span> <Caret $dim />
                </CaretLine>
              </BigTool>
              <BigTool $w={44}>
                <BigIconBox>
                  <FindIcon />
                </BigIconBox>
                <span>{jp('検索と')}</span>
                <CaretLine>
                  選択 <Caret />
                </CaretLine>
              </BigTool>
            </GroupBody>
            <GroupLabel>{jp('編集')}</GroupLabel>
          </Group>

          <Group $w={58}>
            <GroupBody>
              <BigTool $w={57}>
                <BigIconBox>
                  <BoltIcon />
                </BigIconBox>
                <span>{jp('アイ')}</span>
                <CaretLine>{jp('デア')}</CaretLine>
              </BigTool>
            </GroupBody>
            <GroupLabel>{jp('アイデア')}</GroupLabel>
          </Group>
          <Collapse />
        </Ribbon>

        <FormulaBar>
          <NameBox>
            A106
            <Caret />
          </NameBox>
          <BarDots>⋮</BarDots>
          <BarButtons>
            <Icon w={12} h={12}>
              <path d="M1 1l10 10M11 1L1 11" stroke="#c2c2c2" strokeWidth="1.6" />
            </Icon>
            <Icon w={14} h={12}>
              <path d="M1 6l4 5 8-10" stroke="#c2c2c2" strokeWidth="1.8" />
            </Icon>
            <FxMark>fx</FxMark>
          </BarButtons>
          <FormulaInput>
            選択してください
            <Caret />
          </FormulaInput>
        </FormulaBar>

        <SheetRow>
          <Sheet>
            <Corner />
            {columns.map(([label, c, on, dbl]) => (
              <ColHead key={label} $c={c} $on={on} $double={dbl}>
                {label}
              </ColHead>
            ))}
            {rowLabels.map((label, i) => (
              <RowHead key={label} $r={i + 2} $on={label === '106'} $thick={label === '92'}>
                {label}
              </RowHead>
            ))}

            <Cell $c="2" $r="2" $bg="#f2f2f2">
              {jp('初オンエアー日')}
              <Red>{jp('（必須）')}</Red>
            </Cell>
            <Cell $c="3 / 5" $r="2" />
            <Cell $c="5 / 12" $r="2" $bg="#f2f2f2">
              {jp('※')}
              <Mosaic>
                {tiles.map((t, i) => (
                  <Tile key={i} $bg={t} />
                ))}
              </Mosaic>
              {jp('の間で入力してください。')}
            </Cell>
            <Cell $c="12 / 14" $r="2" />

            <Cell $c="2 / 12" $r="4" $bg="#808080" $color="#fff" $bold $top>
              {jp('作品会社情報')}
              <Yellow>{jp('（システム取込対象外）')}</Yellow>
            </Cell>
            <Cell $c="12 / 14" $r="4" $bg="#f2f2f2" $top>
              {jp(MEMO)}
            </Cell>

            {companies.map(([name, span]) => (
              <React.Fragment key={name}>
                <Cell $c="2" $r={span} $bg="#f2f2f2" $align="start">
                  {jp(name)}
                </Cell>
                <Cell $c="3" $r={span} $bg="#f2f2f2">
                  1社目
                </Cell>
                <Cell $c="4" $r={span} $bg="#f2f2f2">
                  社名
                </Cell>
                <Cell $c="5 / 10" $r={span} />
                <ButtonCell $c="10 / 12" $r={span}>
                  <SheetButton>追加</SheetButton>
                  <SheetButton>削除</SheetButton>
                </ButtonCell>
                <Cell $c="12 / 14" $r={span} />
              </React.Fragment>
            ))}

            <Cell $c="2 / 12" $r="12" $bg="#2f5597" $color="#fff" $bold $top>
              {jp('制作スタッフ')}
            </Cell>
            <Cell $c="12 / 14" $r="12" $bg="#f2f2f2" $top>
              {jp(MEMO)}
            </Cell>

            <Cell $c="2" $r="13 / 15" $bg="#d0cece">
              {jp('名前の記入例')}
            </Cell>
            <NoteCell $c="3 / 12" $r="13 / 15" $bg="#f2f2f2">
              {jp('日本語名の場合[全角]　 : 　苗字（姓）＋名前（名）')}
              <Red> {jp('※姓と名の間を空けない')}</Red>
              {jp('\n英語名の場合[半角]　 : 　')}
              <Latin>First Name</Latin>
              <Red>{jp('(半角スペース)')}</Red>
              <Latin>Middle Name</Latin>
              <Red>{jp('(半角スペース)')}</Red>
              <Latin>Family Name</Latin>
              {'\n\n'}
              <Red>{jp('※スタッフの肩書（役割）を選択すると、氏名がクリアされます。')}</Red>
            </NoteCell>
            <Cell $c="12 / 14" $r="13 / 15" />

            <ActiveCell $c="2" $r="15" $bg="#f2f2f2" $align="start">
              {jp('選択してください')}
            </ActiveCell>
            <Cell $c="3" $r="15" $bg="#f2f2f2">
              氏名
            </Cell>
            <Cell $c="4 / 10" $r="15" />
            <ButtonCell $c="10 / 12" $r="15">
              <SheetButton>人員追加</SheetButton>
              <SheetButton>人員削除</SheetButton>
            </ButtonCell>
            <Cell $c="12 / 14" $r="15" />

            <Cell $c="4 / 12" $r="20" $bare>
              {jp('※出力したCSVを利用し、エントリー画面からエントリーが可能です。')}
            </Cell>

            <CsvButton>取込用CSV出力</CsvButton>

            <DropButton>
              <DownArrow />
            </DropButton>
            <DropList>
              <DropItems>
                {staff.map((s, i) => (
                  <DropItem key={s} $on={i === 0}>
                    {s}
                  </DropItem>
                ))}
              </DropItems>
              <DropScroll>
                <Icon w={12} h={7}>
                  <path d="M1 6l5-5 5 5" stroke="#555" strokeWidth="1.6" />
                </Icon>
                <Icon w={12} h={7}>
                  <path d="M1 1l5 5 5-5" stroke="#555" strokeWidth="1.6" />
                </Icon>
              </DropScroll>
            </DropList>
            <RedFrame />
          </Sheet>
          <VScroll>
            <ScrollButton $h={17}>
              <UpArrow />
            </ScrollButton>
            <ScrollTrack>
              <ScrollThumb />
            </ScrollTrack>
            <ScrollButton $h={15}>
              <DownArrow />
            </ScrollButton>
          </VScroll>
        </SheetRow>

        <TabBar>
          <TabNav>
            <SideArrow $dir="l" />
            <SideArrow $dir="r" />
          </TabNav>
          <SheetTab>フィルム部門</SheetTab>
          <AddSheet>+</AddSheet>
          <TabDots>⋮</TabDots>
          <HScroll>
            <HButton>
              <SideArrow $dir="l" $dark />
            </HButton>
            <HThumb />
            <HRest />
            <HButton>
              <SideArrow $dir="r" $dark />
            </HButton>
          </HScroll>
        </TabBar>

        <StatusBar>
          <Icon w={14} h={14}>
            <circle cx="3.500" cy="3" r="2.500" fill="#555" />
            <path d="M6 1.500h7.500v12H1.500V6" stroke="#555" />
            <path d="M3 8h9M3 10h9M3 12h9M6 6v7M9 4v9" stroke="#555" strokeDasharray="1.500 1" />
          </Icon>
          <StatusRight>
            <ViewButton $on>
              <Icon w={14} h={14}>
                <rect x=".5" y=".5" width="13" height="13" stroke="#666" />
                <path d="M0 5h14M0 9.500h14M5 0v14M9.500 0v14" stroke="#666" />
              </Icon>
            </ViewButton>
            <ViewButton>
              <Icon w={14} h={14}>
                <rect x=".5" y=".5" width="13" height="13" stroke="#666" />
                <rect x="3.500" y="3.500" width="7" height="7" stroke="#666" />
                <path d="M5 5.500h4M5 7.500h4" stroke="#666" />
              </Icon>
            </ViewButton>
            <ViewButton>
              <Icon w={14} h={14}>
                <rect x=".5" y=".5" width="13" height="13" stroke="#666" />
                <path d="M5 0v7h4V0M1 7h12" stroke="#666" />
              </Icon>
            </ViewButton>
            <Slot $w={3} />
            <ZoomSign>-</ZoomSign>
            <ZoomTrack />
            <ZoomSign>+</ZoomSign>
            <ZoomValue>100%</ZoomValue>
          </StatusRight>
        </StatusBar>
      </Frame>
    </>
  )
}
